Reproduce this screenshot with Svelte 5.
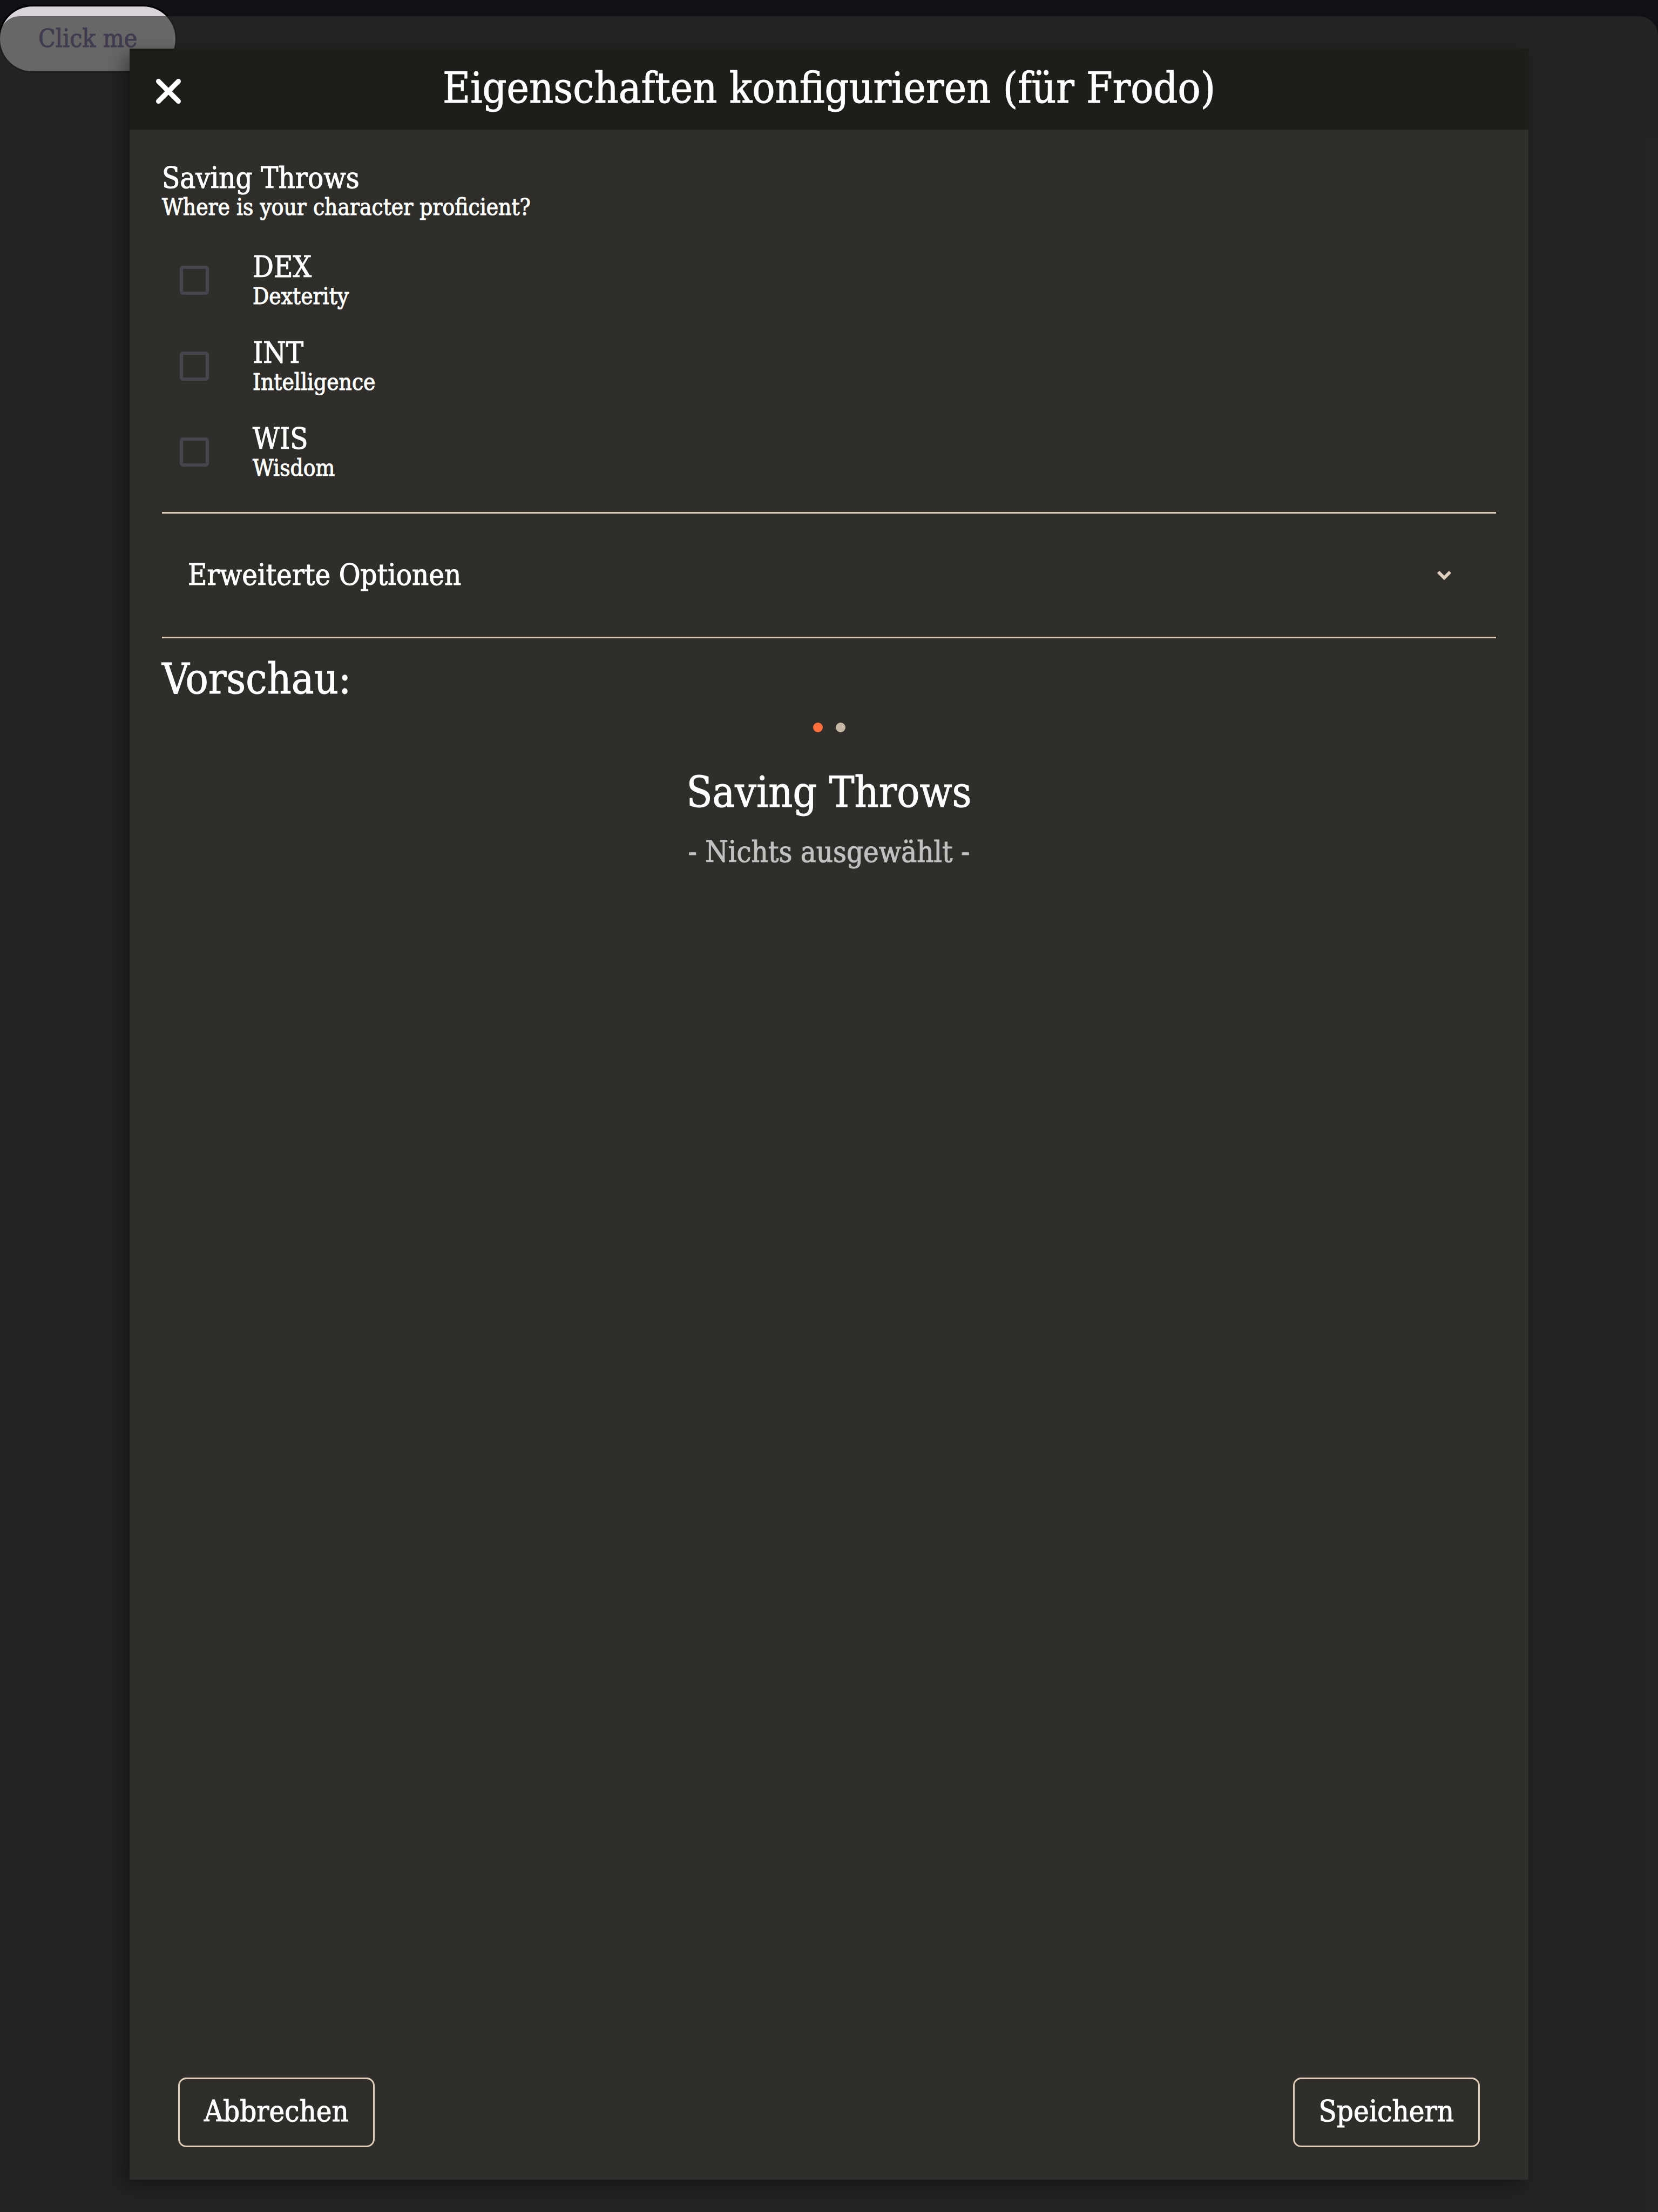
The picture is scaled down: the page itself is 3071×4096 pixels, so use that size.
<script>
  let open = $state(false);
  let abilities = $state([
    { id: 'dex', short: 'DEX', name: 'Dexterity', checked: false },
    { id: 'int', short: 'INT', name: 'Intelligence', checked: false },
    { id: 'wis', short: 'WIS', name: 'Wisdom', checked: false }
  ]);
</script>

<div class="page">
  <button class="trigger" type="button">Click me</button>
</div>

<div class="backdrop">
  <div class="dialog" role="dialog" aria-modal="true" aria-labelledby="dialog-title">
    <header>
      <button class="close" type="button" aria-label="Schließen">
        <svg viewBox="0 0 48 48" aria-hidden="true">
          <path d="M5.500 5.500L42.500 42.500M42.500 5.500L5.500 42.500" />
        </svg>
      </button>
      <h1 id="dialog-title">Eigenschaften konfigurieren (für Frodo)</h1>
    </header>

    <main>
      <fieldset>
        <legend>
          <span class="label">Saving Throws</span>
          <span class="hint">Where is your character proficient?</span>
        </legend>
        {#each abilities as ability (ability.id)}
          <label class="option" for={ability.id}>
            <input id={ability.id} type="checkbox" bind:checked={ability.checked} />
            <span class="text">
              <span class="label">{ability.short}</span>
              <span class="hint">{ability.name}</span>
            </span>
          </label>
        {/each}
      </fieldset>

      <button class="expander" type="button" aria-expanded={open} onclick={() => (open = !open)}>
        <span>Erweiterte Optionen</span>
        <svg class:open viewBox="0 0 30 18" aria-hidden="true">
          <path d="M4 3L15 14L26 3" />
        </svg>
      </button>

      <section class="preview">
        <h2>Vorschau:</h2>
        <div class="dots">
          <span class="dot active"></span>
          <span class="dot"></span>
        </div>
        <h3>Saving Throws</h3>
        <p>- Nichts ausgewählt -</p>
      </section>
    </main>

    <footer>
      <button class="action" type="button">Abbrechen</button>
      <button class="action" type="button">Speichern</button>
    </footer>
  </div>
</div>

<style>
  :global(body) {
    margin: 0;
    background: #121015;
  }

  .page,
  .backdrop {
    font-family: 'DejaVu Serif Condensed', 'DejaVu Serif', serif;
    color: #fff;
    -webkit-text-stroke: 1px currentColor;
  }

  button {
    font: inherit;
    color: inherit;
    background: none;
    border: 0;
    padding: 0;
    cursor: pointer;
  }

  .page {
    min-height: 100vh;
    box-sizing: border-box;
    padding-top: 12px;
  }

  .trigger {
    display: block;
    height: 120px;
    padding: 0 71px 2px;
    border-radius: 60px;
    background: #dad5dc;
    color: #65558f;
    font-size: 46px;
    box-shadow: 0 0 0 3px #000;
  }

  .backdrop {
    position: absolute;
    inset: 30px 0 0;
    box-sizing: border-box;
    display: flex;
    padding: 60px 240px;
    border-radius: 36px 36px 0 0;
    background: rgba(46, 46, 44, 0.66);
  }

  .dialog {
    flex: 1;
    display: flex;
    flex-direction: column;
    background: #2f2e2a;
    box-shadow: -12px 12px 30px rgba(0, 0, 0, 0.36);
  }

  header {
    display: grid;
    grid-template-columns: 144px 1fr 144px;
    align-items: center;
    height: 150px;
    background: #1e1d1a;
  }

  .close {
    display: flex;
    justify-content: center;
    padding-top: 8px;
  }

  .close svg {
    width: 48px;
    height: 48px;
    fill: none;
    stroke: #fff;
    stroke-width: 9;
    stroke-linecap: round;
  }

  h1,
  h2,
  h3 {
    margin: 0;
    font-size: 78px;
    line-height: 90px;
    font-weight: 400;
  }

  h1 {
    text-align: center;
    padding-bottom: 4px;
  }

  main {
    flex: 1;
    padding: 60px 60px 0;
  }

  fieldset {
    margin: 0;
    padding: 0 0 33px;
    border: 0;
    border-bottom: 3px solid #dfcdbb;
  }

  legend {
    padding: 0 0 30px;
  }

  .label,
  .hint {
    display: block;
  }

  .label {
    font-size: 54px;
    line-height: 60px;
  }

  .hint {
    font-size: 42px;
    line-height: 48px;
  }

  .option {
    display: flex;
    align-items: center;
    gap: 81px;
    padding: 27px 33px 24px;
  }

  .option input {
    appearance: none;
    flex: none;
    width: 54px;
    height: 54px;
    margin: 0;
    border: 6px solid #48444e;
    border-radius: 6px;
  }

  .option input:checked {
    background: #ff703c;
  }

  .expander {
    display: flex;
    align-items: center;
    justify-content: space-between;
    width: 100%;
    height: 231px;
    padding: 0 81px 0 48px;
    border-bottom: 3px solid #dfcdbb;
    font-size: 54px;
    line-height: 60px;
  }

  .expander svg {
    width: 30px;
    height: 18px;
    fill: none;
    stroke: #e0cfbd;
    stroke-width: 6;
  }

  .expander svg.open {
    transform: rotate(180deg);
  }

  .preview {
    display: flex;
    flex-direction: column;
    align-items: center;
    padding-top: 30px;
  }

  h2 {
    align-self: flex-start;
  }

  .dots {
    display: flex;
    gap: 24px;
    padding: 36px 0 66px;
  }

  .dot {
    width: 18px;
    height: 18px;
    border-radius: 50%;
    background: #c4b7a6;
  }

  .dot.active {
    background: #ff703c;
  }

  p {
    margin: 36px 0 0;
    font-size: 54px;
    line-height: 60px;
    color: #c1c1c1;
  }

  footer {
    display: flex;
    justify-content: space-between;
    padding: 0 90px 60px;
  }

  .action {
    height: 129px;
    padding: 0 45px 4px;
    border: 3px solid #dfcdba;
    border-radius: 15px;
    font-size: 54px;
    line-height: 60px;
  }
</style>
